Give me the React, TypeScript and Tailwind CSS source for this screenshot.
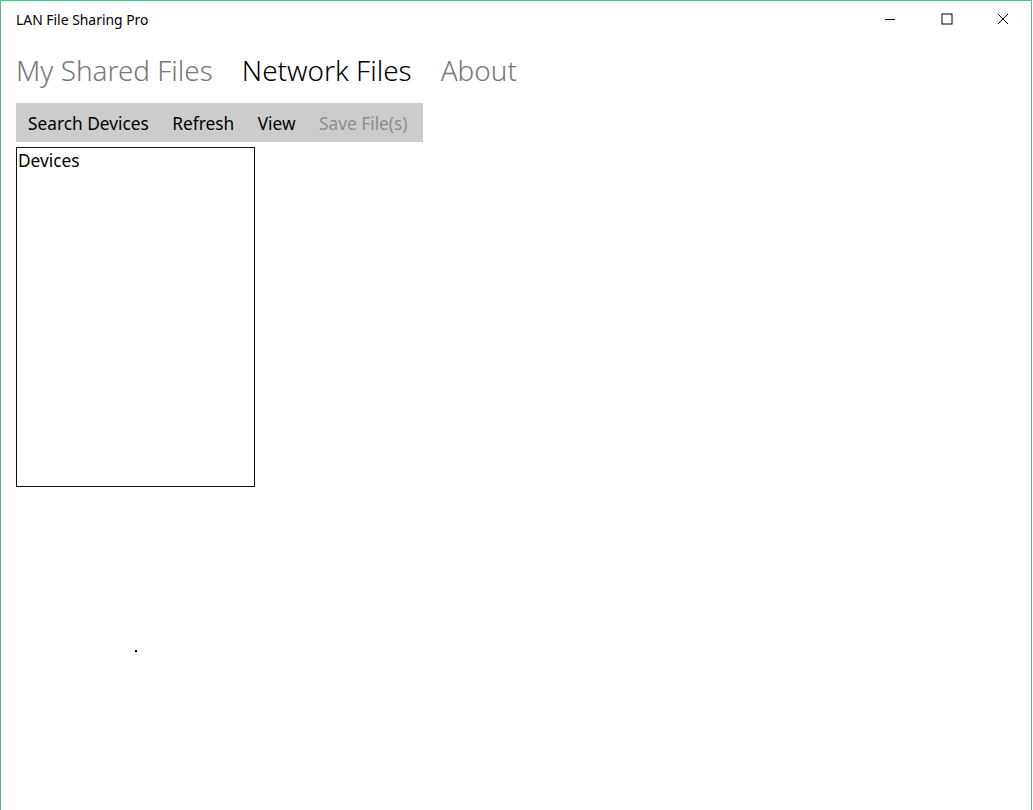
import React from "react";

export default function App() {
  return (
    <div className="w-[1033px] h-[810px] bg-white overflow-hidden" style={{ fontFamily: '"Noto Sans", "Open Sans", sans-serif' }}>
      <div className="w-[1032px] h-[810px] border-l border-t border-r border-[#5bb986] flex flex-col">
        <div className="h-[38px] flex items-start">
          <div className="pl-[15px] pt-[10px] text-[13.9px] text-black leading-[18px] flex-1">LAN File Sharing Pro</div>
          <div className="flex h-[32px]">
            <div className="w-[46px] h-[32px] flex items-center justify-center mt-[2px]">
              <svg width="12" height="12" viewBox="0 0 12 12"><line x1="1" y1="6.5" x2="11" y2="6.5" stroke="#000" strokeWidth="1" /></svg>
            </div>
            <div className="w-[46px] h-[32px] flex items-center justify-center mt-[2px] ml-[11px]">
              <svg width="12" height="12" viewBox="0 0 12 12"><rect x="1" y="1" width="10" height="10" fill="none" stroke="#000" strokeWidth="1" /></svg>
            </div>
            <div className="w-[46px] h-[32px] flex items-center justify-center mt-[2px] ml-[10px] mr-[5px]">
              <svg width="12" height="12" viewBox="0 0 12 12"><path d="M1 1 L11 11 M11 1 L1 11" stroke="#000" strokeWidth="1" /></svg>
            </div>
          </div>
        </div>
        <div className="flex items-end gap-[29px] pl-[15px] h-[51px] text-[27.9px] leading-[40px] font-light">
          <span className="text-[#777777]">My Shared Files</span>
          <span className="text-black">Network Files</span>
          <span className="text-[#777777]">About</span>
        </div>
        <div className="mt-[13px] ml-[15px] w-[407px] h-[39px] bg-[#cccccc] flex items-center pl-[12px] pt-[2px] gap-[23.5px] text-[17.3px] leading-[24px]">
          <span className="text-black">Search Devices</span>
          <span className="text-black">Refresh</span>
          <span className="text-black">View</span>
          <span className="text-[#8c8c8c]">Save File(s)</span>
        </div>
        <div className="mt-[5px] ml-[15px] w-[239px] h-[340px] border-[1.5px] border-[#111] pl-[1px] pt-[1px] text-[17.3px] leading-[24px] text-black">
          Devices
        </div>
        <div className="ml-[134px] mt-[163px] w-[2px] h-[2px] bg-black" />
      </div>
    </div>
  );
}
